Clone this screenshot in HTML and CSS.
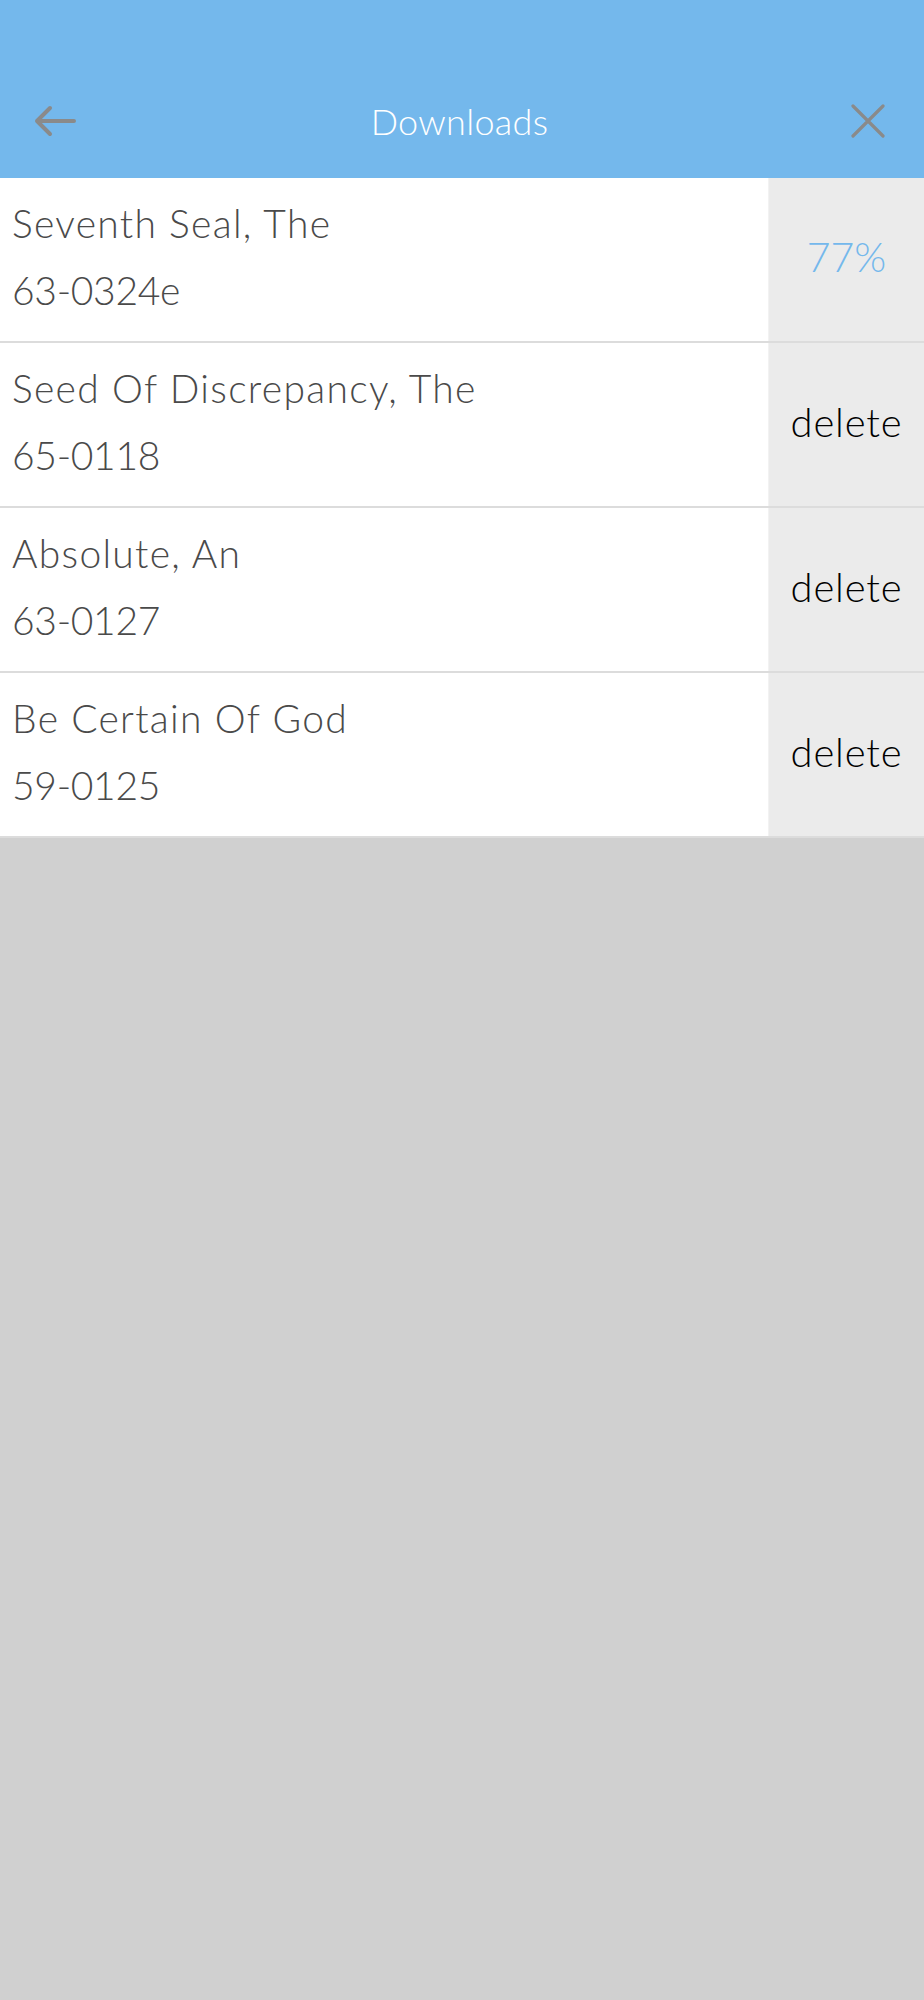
FILE: index.html
```html
<!DOCTYPE html>
<html lang="en">
<head>
<meta charset="utf-8">
<title>Downloads</title>
<link rel="stylesheet" href="styles.css">
</head>
<body>
<div class="app">
  <header class="header">
    <div class="nav">
      <div class="nav-left">
        <svg class="icon-back" width="44" height="32" viewBox="0 0 44 32" aria-hidden="true">
          <path d="M3 16 H40 M16 3 L3 16 L16 29" fill="none" stroke="#8a8a8a" stroke-width="4" stroke-linecap="round" stroke-linejoin="round"/>
        </svg>
      </div>
      <div class="nav-title">Downloads</div>
      <div class="nav-right">
        <svg class="icon-close" width="34" height="34" viewBox="0 0 34 34" aria-hidden="true">
          <path d="M2 2 L32 32 M32 2 L2 32" fill="none" stroke="#8a8a8a" stroke-width="3.2" stroke-linecap="round"/>
        </svg>
      </div>
    </div>
  </header>
  <ul class="list">
    <li class="row">
      <div class="row-main">
        <div class="row-title">Seventh Seal, The</div>
        <div class="row-code">63-0324e</div>
      </div>
      <div class="row-action progress">77%</div>
    </li>
    <li class="row">
      <div class="row-main">
        <div class="row-title">Seed Of Discrepancy, The</div>
        <div class="row-code">65-0118</div>
      </div>
      <div class="row-action">delete</div>
    </li>
    <li class="row">
      <div class="row-main">
        <div class="row-title">Absolute, An</div>
        <div class="row-code">63-0127</div>
      </div>
      <div class="row-action">delete</div>
    </li>
    <li class="row">
      <div class="row-main">
        <div class="row-title">Be Certain Of God</div>
        <div class="row-code">59-0125</div>
      </div>
      <div class="row-action">delete</div>
    </li>
  </ul>
</div>
</body>
</html>
```

FILE: styles.css
```css
html, body {
  margin: 0;
  padding: 0;
}
body {
  background: #d0d0d0;
  font-family: Lato, "Noto Sans", "Liberation Sans", sans-serif;
  min-height: 2000px;
}
.app {
  width: 924px;
}
.header {
  background: #74b8ec;
  height: 178px;
  padding-top: 64px;
  box-sizing: border-box;
}
.nav {
  height: 114px;
  display: grid;
  grid-template-columns: 1fr auto 1fr;
  align-items: center;
  padding: 0 39px 0 34px;
}
.nav-left {
  display: flex;
  justify-content: flex-start;
}
.nav-right {
  display: flex;
  justify-content: flex-end;
}
.icon-back, .icon-close {
  display: block;
}
.nav-title {
  color: #ffffff;
  font-size: 36px;
  font-weight: 300;
  line-height: 44px;
  letter-spacing: 0.3px;
}
.list {
  list-style: none;
  margin: 0;
  padding: 0;
}
.row {
  display: flex;
  height: 163px;
  background: #ffffff;
  border-bottom: 2px solid #dcdcdc;
}
.row-main {
  flex: 1;
  padding: 12px 0 0 12px;
  color: #4a4a4a;
  font-size: 39px;
  font-weight: 300;
  line-height: 67px;
}
.row-title {
  letter-spacing: 1.3px;
}
.row-code {
  letter-spacing: -0.3px;
}
.row-action {
  width: 156px;
  background: #ebebeb;
  border-left: 1px solid #f2f2f2;
  display: flex;
  align-items: center;
  justify-content: center;
  padding-bottom: 6px;
  box-sizing: border-box;
  font-size: 40px;
  font-weight: 300;
  letter-spacing: 0.8px;
  color: #000000;
}
.row-action.progress {
  color: #74b8ec;
  font-weight: 300;
  letter-spacing: 0;
  font-size: 41px;
}
```
